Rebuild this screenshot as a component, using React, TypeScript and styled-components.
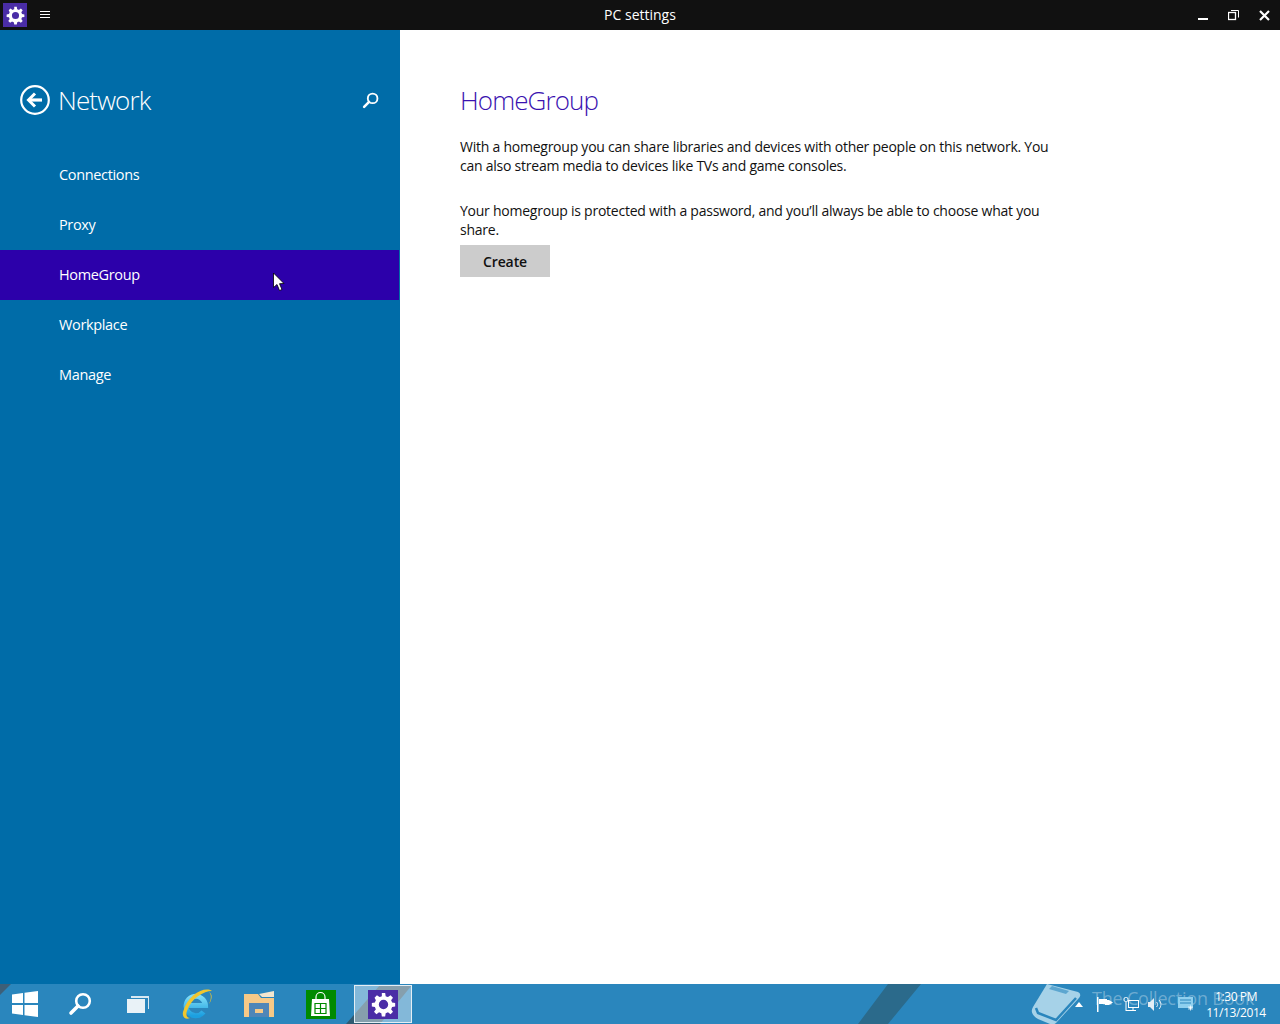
import { FC } from 'react';
import styled, { createGlobalStyle } from 'styled-components';

const GlobalStyle = createGlobalStyle`
html, body {
    margin: 0;
    padding: 0;
    background: #fff;
}
#root {
    width: 1280px;
    height: 1024px;
    overflow: hidden;
}
* {
    box-sizing: border-box;
}
`;

const Screen = styled.div`
position: relative;
width: 1280px;
height: 1024px;
display: flex;
flex-direction: column;
font-family: "Open Sans", "Noto Sans", sans-serif;
`;

const TitleBar = styled.header`
height: 30px;
flex: none;
position: relative;
display: flex;
align-items: center;
background: #111;
color: #fff;
`;
const AppBadge = styled.div`
width: 24px;
height: 24px;
margin-left: 3px;
display: flex;
align-items: center;
justify-content: center;
background: #4a2da6;
`;
const AppBadgeLarge = styled.div`
width: 30px;
height: 29px;
display: flex;
align-items: center;
justify-content: center;
background: #4a2da6;
`;
const MenuButton = styled.button`
width: 10px;
height: 7px;
margin: -1px 0 0 13px;
padding: 0;
border: none;
border-top: 1px solid #fff;
border-bottom: 1px solid #fff;
background: transparent;
position: relative;
&::after {
    content: "";
    position: absolute;
    left: 0;
    right: 0;
    top: 2px;
    height: 1px;
    background: #fff;
}
`;
const Title = styled.div`
position: absolute;
left: 0;
right: 0;
margin-top: -1px;
text-align: center;
font-size: 14px;
`;
const WindowControls = styled.div`
display: flex;
margin-left: auto;
`;
const ControlButton = styled.div`
width: 31px;
height: 30px;
display: flex;
align-items: center;
justify-content: center;
`;

const Main = styled.div`
flex: 1;
display: flex;
min-height: 0;
`;
const Sidebar = styled.aside`
width: 400px;
flex: none;
padding-top: 50px;
background: #006ca8;
color: #fff;
`;
const SideHeader = styled.div`
height: 40px;
margin-bottom: 30px;
padding: 0 21px 0 20px;
display: flex;
align-items: center;
h1 {
    margin: 0 auto 0 8px;
    font-size: 26px;
    font-weight: 300;
    letter-spacing: -0.85px;
}
`;
const NavList = styled.nav`
display: flex;
flex-direction: column;
`;
const NavItem = styled.div<{ $active?: boolean }>`
width: 399px;
height: 50px;
padding: 0 0 2px 59px;
display: flex;
align-items: center;
font-size: 14.5px;
letter-spacing: -0.35px;
background: ${({ $active }) => ($active ? '#2c00aa' : 'transparent')};
`;

const Content = styled.main`
flex: 1;
padding: 50px 0 0 60px;
color: #111;
h2 {
    margin: 0 0 17px;
    height: 40px;
    line-height: 40px;
    font-size: 26px;
    font-weight: 300;
    letter-spacing: -0.9px;
    color: #3a12b0;
}
p {
    width: 600px;
    margin: 0 0 26px;
    font-size: 14px;
    line-height: 19px;
    letter-spacing: -0.24px;
}
p:last-of-type {
    margin-bottom: 6px;
}
`;
const CreateButton = styled.button`
width: 90px;
height: 32px;
padding: 0;
border: none;
background: #ccc;
color: #111;
font-family: inherit;
font-size: 14px;
font-weight: 600;
letter-spacing: -0.1px;
`;

const Taskbar = styled.footer`
height: 40px;
flex: none;
position: relative;
display: flex;
background: #2a86bd;
`;
const Wallpaper = styled.svg`
position: absolute;
inset: 0;
`;
const TaskItem = styled.div<{ $width: number; $selected?: boolean }>`
position: relative;
width: ${({ $width }) => $width}px;
height: 40px;
display: flex;
align-items: center;
justify-content: center;
${({ $selected }) => $selected && `
    margin: 1px 0 1px 1px;
    height: 38px;
    border: 1px solid #e4eef4;
    background: rgba(255, 255, 255, 0.42);
`}
`;
const Watermark = styled.div`
position: absolute;
left: 1092px;
top: 2px;
font-size: 18px;
letter-spacing: -0.2px;
white-space: nowrap;
color: rgba(255, 255, 255, 0.32);
`;
const Tray = styled.div`
position: relative;
margin-left: auto;
display: flex;
align-items: center;
padding-right: 14px;
`;
const TrayIcon = styled.div<{ $width: number }>`
width: ${({ $width }) => $width}px;
display: flex;
justify-content: center;
`;
const Clock = styled.div`
width: 65px;
padding: 2px 0 0 5px;
text-align: center;
white-space: nowrap;
color: #fff;
font-size: 12px;
line-height: 16px;
letter-spacing: -0.4px;
`;
const Pointer = styled.svg`
position: absolute;
left: 272px;
top: 272px;
`;

const GEAR = 'M10.400 1h3.200l.5 3a8 8 0 0 1 2.200.9l2.500-1.800 2.300 2.300-1.800 2.500a8 8 0 0 1 .9 2.200l3 .5v3.200l-3 .5a8 8 0 0 1-.9 2.200l1.800 2.500-2.300 2.300-2.500-1.800a8 8 0 0 1-2.200.9l-.5 3h-3.200l-.5-3a8 8 0 0 1-2.200-.9l-2.500 1.800-2.300-2.300 1.800-2.500a8 8 0 0 1-.9-2.200l-3-.5v-3.200l3-.5a8 8 0 0 1 .9-2.200L3.400 5.400l2.300-2.300 2.500 1.800a8 8 0 0 1 2.200-.9zM12 7.500a4.500 4.500 0 1 0 0 9 4.500 4.500 0 0 0 0-9z';

const Gear: FC<{ size: number }> = ({ size }) => (
    <svg width={size} height={size} viewBox="0 0 24 24">
        <path fill="#fff" fillRule="evenodd" d={GEAR} />
    </svg>
);

const SearchGlass: FC<{ size: number; stroke: number }> = ({ size, stroke }) => (
    <svg width={size} height={size} viewBox="0 0 24 24" fill="none" stroke="#fff">
        <circle cx="15" cy="9" r="6.800" strokeWidth={stroke} />
        <path d="M10 14 3 21" strokeWidth={stroke + 1} strokeLinecap="round" />
    </svg>
);

const App: FC = () => {
    const items = ['Connections', 'Proxy', 'HomeGroup', 'Workplace', 'Manage'];

    return (
        <Screen>
            <GlobalStyle />
            <TitleBar>
                <AppBadge><Gear size={19} /></AppBadge>
                <MenuButton aria-label="menu" />
                <Title>PC settings</Title>
                <WindowControls>
                    <ControlButton>
                        <svg width="10" height="10" viewBox="0 0 10 10"><rect y="8" width="10" height="2" fill="#fff" /></svg>
                    </ControlButton>
                    <ControlButton>
                        <svg width="11" height="11" viewBox="0 0 11 11" fill="none" stroke="#fff">
                            <rect x="0.5" y="2.500" width="7" height="7" strokeWidth="1.300" />
                            <path d="M3 .5h7.500V7.500" />
                        </svg>
                    </ControlButton>
                    <ControlButton>
                        <svg width="11" height="11" viewBox="0 0 11 11" stroke="#fff" strokeWidth="2.200">
                            <path d="M1 1l9 9M10 1l-9 9" />
                        </svg>
                    </ControlButton>
                </WindowControls>
            </TitleBar>
            <Main>
                <Sidebar>
                    <SideHeader>
                        <svg width="30" height="30" viewBox="0 0 30 30" fill="none" stroke="#fff">
                            <circle cx="15" cy="15" r="13.800" strokeWidth="2.200" />
                            <path d="M22 15H10" strokeWidth="3.200" />
                            <path d="M15 8.500 8.500 15l6.500 6.500" strokeWidth="3" />
                        </svg>
                        <h1>Network</h1>
                        <SearchGlass size={17} stroke={2.600} />
                    </SideHeader>
                    <NavList>
                        {items.map((item) => (
                            <NavItem key={item} $active={item === 'HomeGroup'}>{item}</NavItem>
                        ))}
                    </NavList>
                </Sidebar>
                <Content>
                    <h2>HomeGroup</h2>
                    <p>With a homegroup you can share libraries and devices with other people on this network. You can also stream media to devices like TVs and game consoles.</p>
                    <p>Your homegroup is protected with a password, and you’ll always be able to choose what you share.</p>
                    <CreateButton>Create</CreateButton>
                </Content>
            </Main>
            <Taskbar>
                <Wallpaper width="1280" height="40" viewBox="0 0 1280 40">
                    <polygon points="0,0 11,0 0,11" fill="#3d5f78" />
                    <polygon points="888,0 921,0 888,40 858,40" fill="#2b6a8b" />
                    <polygon points="346,40 380,1 412,1 380,40" fill="#2f5a72" />
                    <path d="M1047 0 1078 8Q1082 10 1079 14L1056 39Q1054 41 1050 40L1038 35Q1029 30 1033 23z" fill="#a6d2e8" />
                    <path d="M1036 24 1038 29 1056 36 1076 14" fill="none" stroke="#2a86bd" strokeWidth="2.500" />
                    <path d="M1052 2 1069 7 1066 10 1049 5z" fill="#5ca6d0" />
                </Wallpaper>
                <TaskItem $width={50}>
                    <svg width="26" height="26" viewBox="0 0 26 26" fill="#fff">
                        <polygon points="0,3.500 11,2 11,12 0,12" />
                        <polygon points="12.500,1.800 26,0 26,12 12.500,12" />
                        <polygon points="0,14 11,14 11,24 0,22.500" />
                        <polygon points="12.500,14 26,14 26,26 12.500,24.200" />
                    </svg>
                </TaskItem>
                <TaskItem $width={60}><SearchGlass size={24} stroke={2.600} /></TaskItem>
                <TaskItem $width={56}>
                    <svg width="22" height="17" viewBox="0 0 22 17">
                        <path d="M4 0h18v13h-1V2H4z" fill="#d8e8f2" />
                        <rect x="0" y="3" width="18" height="14" fill="#e9f2f7" />
                    </svg>
                </TaskItem>
                <TaskItem $width={62}>
                    <svg width="32" height="32" viewBox="0 0 32 32">
                        <defs>
                            <linearGradient id="ie-e" x1="0" y1="0" x2="0" y2="1">
                                <stop offset="0" stopColor="#7edcf6" />
                                <stop offset="1" stopColor="#1b9fe0" />
                            </linearGradient>
                        </defs>
                        <path d="M6 17.500H24.500A9.700 9.700 0 1 0 22.500 24" fill="none" stroke="url(#ie-e)" strokeWidth="5" />
                        <path d="M31 3C24-2 7 6 2 24 1 29 4 32 9 30 6 30 4.500 27 6 23 10 10 23 3 31 3z" fill="#f0c62e" />
                        <path d="M28 4c3 3 2 8 0 12 3-4 4-10 0-12z" fill="#f0c62e" />
                    </svg>
                </TaskItem>
                <TaskItem $width={61}>
                    <svg width="30" height="26" viewBox="0 0 30 26">
                        <path d="M0 3h14l3 4h13v19H0z" fill="#f6c987" />
                        <path d="M15 3l15-3v6H18z" fill="#f3e6cf" />
                        <path d="M5 12h20v14H5z" fill="#4f86b8" />
                        <rect x="11" y="18" width="8" height="4" fill="#f6c987" />
                    </svg>
                </TaskItem>
                <TaskItem $width={64}>
                    <svg width="30" height="29" viewBox="0 0 30 29">
                        <rect width="30" height="29" fill="#008a00" />
                        <path d="M6 9h17l1 17H5z" fill="#fff" />
                        <path d="M10 10V7a4.500 4.500 0 0 1 9 0v3" fill="none" stroke="#fff" strokeWidth="1.200" />
                        <path d="M9 13.500h11v10H9zM14.500 13.500v10M9 18.500h11" fill="none" stroke="#008a00" strokeWidth="1.200" />
                    </svg>
                </TaskItem>
                <TaskItem $width={58} $selected>
                    <AppBadgeLarge><Gear size={25} /></AppBadgeLarge>
                </TaskItem>
                <Watermark>The Collection Book</Watermark>
                <Tray>
                    <TrayIcon $width={18}>
                        <svg width="8" height="5" viewBox="0 0 8 5"><polygon points="4,0 8,5 0,5" fill="#fff" /></svg>
                    </TrayIcon>
                    <TrayIcon $width={34}>
                        <svg width="16" height="15" viewBox="0 0 16 15">
                            <path d="M0 0h1.500v15H0z" fill="#fff" />
                            <path d="M2 2h8v1h2l4 2.500L12 8H8V7H2z" fill="#fff" />
                        </svg>
                    </TrayIcon>
                    <TrayIcon $width={17}>
                        <svg width="16" height="15" viewBox="0 0 16 15" fill="none" stroke="#fff">
                            <rect x="1" y="0.500" width="4" height="4" rx="1.500" />
                            <rect x="5.500" y="3.500" width="10" height="7" />
                            <path d="M3 5v9M3 13.500H13M10 11v2" />
                        </svg>
                    </TrayIcon>
                    <TrayIcon $width={31}>
                        <svg width="16" height="15" viewBox="0 0 16 15" fill="none">
                            <path d="M1 5h2l4-4v13l-4-4H1z" fill="#e3eef5" />
                            <path d="M9.500 5c1.500 1.500 1.500 3.500 0 5M12 3c2.500 2.500 2.500 6.500 0 9" stroke="#e3eef5" />
                        </svg>
                    </TrayIcon>
                    <TrayIcon $width={31}>
                        <svg width="16" height="14" viewBox="0 0 16 14">
                            <rect width="15" height="11" fill="#8fd0ef" />
                            <path d="M2 3h11M2 6h11" stroke="#2a86bd" />
                            <path d="M10 11h5M12.500 8.500v5M10.700 9.200l3.600 3.600M14.300 9.200l-3.600 3.600" stroke="#fff" strokeWidth="0.800" />
                        </svg>
                    </TrayIcon>
                    <Clock>1:30 PM<br />11/13/2014</Clock>
                </Tray>
            </Taskbar>
            <Pointer width="13" height="20" viewBox="0 0 13 20">
                <path d="M1.500 1v14.500l3.500-3 2.500 6 2.500-1-2.500-5.800 4.500-.2z" fill="#fff" stroke="#000" strokeWidth="0.800" />
            </Pointer>
        </Screen>
    )
}

export default App;
